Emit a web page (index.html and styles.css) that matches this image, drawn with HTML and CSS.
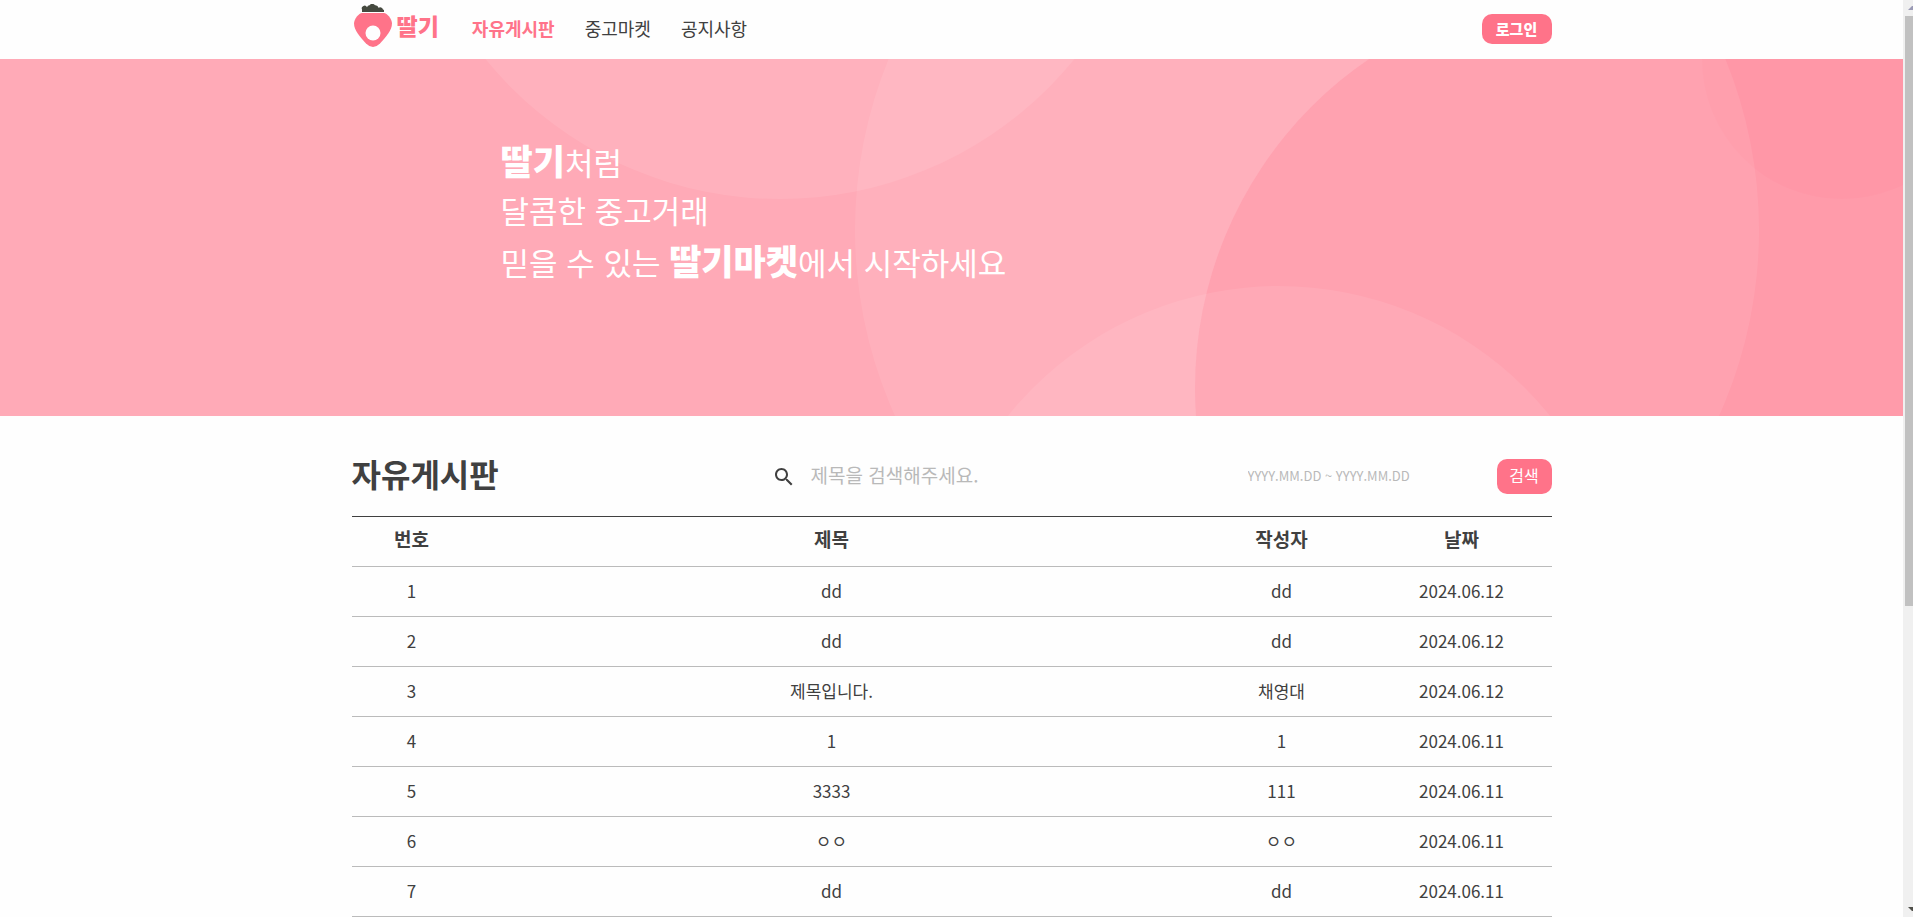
FILE: index.html
```html
<!DOCTYPE html>
<html lang="ko">
<head>
<meta charset="utf-8">
<meta name="viewport" content="width=device-width, initial-scale=1">
<title>딸기 - 자유게시판</title>
<link rel="stylesheet" href="styles.css">
</head>
<body>
<header class="header">
  <div class="container header-inner">
    <a class="logo" href="#">
      <svg class="logo-mark" viewBox="0 0 38 44" aria-hidden="true">
        <path fill="#ff7389" d="M8 9H30C33 9 38 15 38 19.500C38 26 32 33 26 39.500Q22.500 43 19 43Q15.500 43 12 39.500C6 33 0 26 0 19.500C0 15 5 9 8 9Z"/>
        <path fill="#45493f" d="M8 8V5.500A2.600 2.600 0 0 1 13 3.300A3 3 0 0 1 15.500 1.300A3.300 3.300 0 0 1 21 1.300A3.200 3.200 0 0 1 24.500 3.800A3 3 0 0 1 29 5.500L30 6V8Z"/>
        <circle cx="19" cy="29" r="7.500" fill="#fefefe"/>
      </svg>
      <span class="logo-text">딸기</span>
    </a>
    <nav class="nav">
      <a class="nav-link active" href="#">자유게시판</a>
      <a class="nav-link" href="#">중고마켓</a>
      <a class="nav-link" href="#">공지사항</a>
    </nav>
    <button class="login" type="button">로그인</button>
  </div>
</header>

<section class="banner">
  <svg class="banner-art" viewBox="0 59 1903 357" preserveAspectRatio="xMidYMid slice" aria-hidden="true">
    <circle cx="1842" cy="59" r="140" fill="#ff7089" fill-opacity=".08"/>
    <path d="M1593 786A398 398 0 0 1 1593 -10H2400V786Z" fill="#ff7089" fill-opacity=".26"/>
    <circle cx="1307" cy="230" r="452" fill="#fff" fill-opacity=".08"/>
    <circle cx="780" cy="-181" r="380" fill="#fff" fill-opacity=".09"/>
    <circle cx="1279" cy="634" r="348" fill="#fff" fill-opacity=".08"/>
  </svg>
  <div class="banner-inner">
    <p class="banner-line"><strong>딸기</strong>처럼</p>
    <p class="banner-line">달콤한 중고거래</p>
    <p class="banner-line">믿을 수 있는 <strong>딸기마켓</strong>에서 시작하세요</p>
  </div>
</section>

<main class="container">
  <div class="toolbar">
    <h1 class="title">자유게시판</h1>
    <form class="search">
      <label class="search-label" for="keyword" aria-label="제목 검색">
        <svg class="search-icon" viewBox="0 0 24 24" aria-hidden="true"><path fill="#404040" d="M15.500 14h-.79l-.28-.27C15.410 12.590 16 11.110 16 9.500 16 5.910 13.090 3 9.500 3S3 5.910 3 9.500 5.910 16 9.500 16c1.610 0 3.090-.59 4.230-1.570l.27.28v.79l5 4.990L20.490 19l-4.990-5zm-6 0C7.010 14 5 11.990 5 9.500S7.010 5 9.500 5 14 7.010 14 9.500 11.990 14 9.500 14z"/></svg>
      </label>
      <input class="field keyword" id="keyword" type="text" placeholder="제목을 검색해주세요.">
      <input class="field period" type="text" aria-label="기간" placeholder="YYYY.MM.DD ~ YYYY.MM.DD">
      <button class="submit" type="button">검색</button>
    </form>
  </div>

  <table class="board">
    <colgroup><col class="col-no"><col class="col-title"><col class="col-writer"><col class="col-date"></colgroup>
    <thead>
      <tr><th>번호</th><th>제목</th><th>작성자</th><th>날짜</th></tr>
    </thead>
    <tbody>
      <tr><td>1</td><td>dd</td><td>dd</td><td>2024.06.12</td></tr>
      <tr><td>2</td><td>dd</td><td>dd</td><td>2024.06.12</td></tr>
      <tr><td>3</td><td>제목입니다.</td><td>채영대</td><td>2024.06.12</td></tr>
      <tr><td>4</td><td>1</td><td>1</td><td>2024.06.11</td></tr>
      <tr><td>5</td><td>3333</td><td>111</td><td>2024.06.11</td></tr>
      <tr><td>6</td><td>ㅇㅇ</td><td>ㅇㅇ</td><td>2024.06.11</td></tr>
      <tr><td>7</td><td>dd</td><td>dd</td><td>2024.06.11</td></tr>
    </tbody>
  </table>
</main>

<div class="scrollbar" aria-hidden="true">
  <svg class="scroll-arrow" viewBox="0 0 10 16"><path fill="#9a9ab5" d="M5 10L9 6L10 6V10Z"/></svg>
  <div class="scroll-thumb"></div>
  <svg class="scroll-arrow" viewBox="0 0 10 16"><path fill="#50504a" d="M5 6H10V10H9Z"/></svg>
</div>
</body>
</html>
```

FILE: styles.css
```css
* {
  box-sizing: border-box;
}

body {
  margin: 0;
  padding-right: 10px;
  overflow: hidden;
  background: #fefefe;
  color: #404040;
  font-family: "Noto Sans CJK KR", sans-serif;
  font-size: 17px;
}

a {
  color: inherit;
  text-decoration: none;
}

button {
  border: 0;
  border-radius: 10px;
  background: #ff7389;
  color: #fff;
  font-family: inherit;
  cursor: pointer;
}

.container {
  width: 100%;
  max-width: 1200px;
  margin: 0 auto;
}

.header-inner {
  display: flex;
  align-items: center;
  height: 59px;
  padding-bottom: 1px;
}

.logo {
  display: flex;
  align-items: center;
  gap: 5px;
  padding: 0 33px 6px 2px;
  color: #ff7389;
}

.logo-mark {
  width: 38px;
  height: 44px;
}

.logo-text {
  padding-bottom: 3px;
  font-size: 23px;
  font-weight: 900;
  line-height: 30px;
}

.nav {
  display: flex;
  gap: 30px;
  padding-bottom: 3px;
  font-size: 18px;
}

.nav-link.active {
  color: #ff7389;
  font-weight: 700;
}

.login {
  width: 70px;
  height: 30px;
  margin-left: auto;
  padding: 0 0 2px;
  font-size: 15px;
  font-weight: 900;
}

.banner {
  position: relative;
  padding: 76px 0 131px;
  background: #ffaab7;
}

.banner-art {
  position: absolute;
  inset: 0;
  width: 100%;
  height: 100%;
}

.banner-inner {
  position: relative;
  max-width: 902px;
  margin: 0 auto;
  color: #fff;
  font-size: 31px;
  line-height: 50px;
}

.banner-line {
  height: 50px;
  margin: 0;
}

.banner-line strong {
  font-size: 35px;
  font-weight: 900;
}

.toolbar {
  display: grid;
  grid-template-columns: 7fr 13fr;
  align-items: center;
  height: 101px;
  padding-top: 21px;
  border-bottom: 1px solid #404040;
}

.title {
  margin: 0;
  padding-bottom: 8px;
  font-size: 32px;
  line-height: 40px;
}

.search {
  display: grid;
  grid-template-columns: 24px 1fr 249px 55px;
  align-items: center;
}

.search-icon {
  display: block;
  width: 24px;
  height: 24px;
}

.field {
  min-width: 0;
  border: 0;
  outline: 0;
  background: transparent;
  color: #404040;
  font-family: inherit;
}

.field::placeholder {
  color: #b9b9b9;
}

.keyword {
  height: 35px;
  padding: 0 15px 4px;
  font-size: 19px;
}

.period {
  width: 190px;
  height: 35px;
  padding: 0 0 2px;
  font-size: 13px;
}

.submit {
  height: 35px;
  padding: 0 0 4px;
  font-size: 16px;
}

.board {
  width: 100%;
  border-collapse: separate;
  border-spacing: 0;
  table-layout: fixed;
}

.col-no {
  width: 10%;
}

.col-title {
  width: 60%;
}

.col-writer,
.col-date {
  width: 15%;
}

.board th,
.board td {
  height: 50px;
  padding: 0 0 2px;
  border-bottom: 1px solid #bbb;
  line-height: 24px;
  text-align: center;
}

.board th {
  padding-bottom: 6px;
  font-size: 19px;
}

.scrollbar {
  position: fixed;
  top: 0;
  right: 0;
  bottom: 0;
  display: flex;
  flex-direction: column;
  width: 10px;
  background: #f0f0f0;
}

.scroll-arrow {
  width: 10px;
  height: 16px;
}

.scroll-thumb {
  flex: 0 0 auto;
  height: 64.300%;
  margin: 0 0 auto 2px;
  background: #c1c1c1;
}
```
